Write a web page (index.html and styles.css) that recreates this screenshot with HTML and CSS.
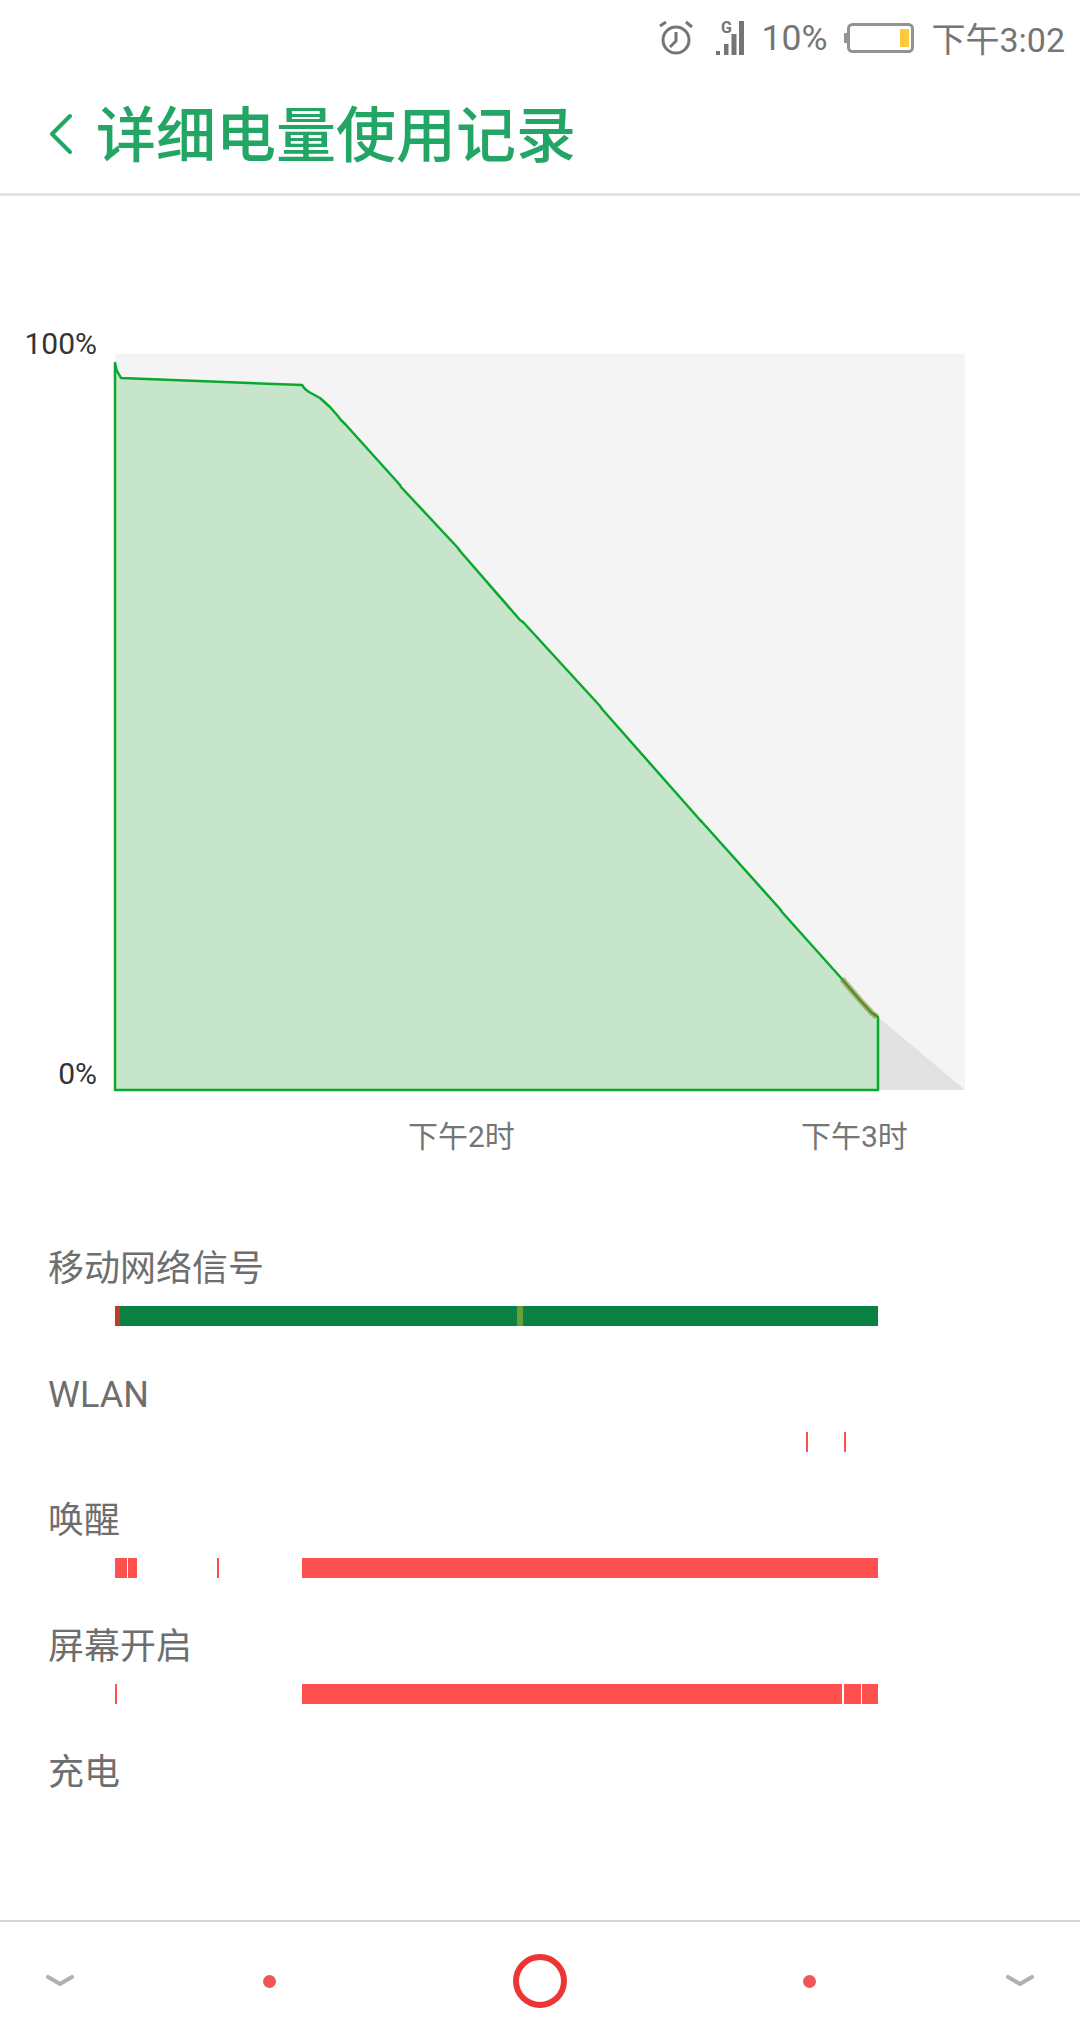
FILE: index.html
```html
<!DOCTYPE html>
<html lang="zh-CN">
<head>
<meta charset="utf-8">
<title>详细电量使用记录</title>
<link rel="stylesheet" href="styles.css">
</head>
<body>
<div class="page">
  <div class="status">
    <svg class="ic-alarm" width="34" height="36" viewBox="0 0 34 36">
      <circle cx="17" cy="20" r="13" fill="none" stroke="#757575" stroke-width="3"/>
      <path d="M17 12v9l-6 6" fill="none" stroke="#757575" stroke-width="3"/>
      <path d="M1 6l6-4M27 2l6 5" fill="none" stroke="#757575" stroke-width="3"/>
    </svg>
    <svg class="ic-signal" width="28" height="44" viewBox="0 -8 28 44">
      <text class="g" x="5" y="13">G</text>
      <rect x="0" y="31" width="4" height="4" fill="#757575"/>
      <rect x="8" y="24" width="4.5" height="11" fill="#757575"/>
      <rect x="15.5" y="14" width="5" height="21" fill="#757575"/>
      <rect x="23" y="1" width="5" height="34" fill="#757575"/>
    </svg>
    <span class="pct">10%</span>
    <svg class="ic-batt" width="70" height="30" viewBox="0 0 70 30">
      <rect x="0" y="10" width="3" height="10" fill="#939393"/>
      <rect x="4.5" y="1.5" width="64" height="27" rx="4" fill="#fff" stroke="#939393" stroke-width="3"/>
      <rect x="56" y="6" width="9" height="18" fill="#ffca3a"/>
    </svg>
    <span class="time">下午3:02</span>
  </div>

  <header class="nav">
    <svg class="back" width="24" height="44" viewBox="0 0 24 44">
      <path d="M21 4L3 22l18 18" fill="none" stroke="#22a565" stroke-width="4" stroke-linecap="round" stroke-linejoin="round"/>
    </svg>
    <h1 class="title">详细电量使用记录</h1>
  </header>

  <svg class="chart" width="1080" height="1046" viewBox="0 196 1080 1046">
    <text class="axis" x="97" y="354">100%</text>
    <text class="axis" x="97" y="1084">0%</text>
    <rect x="115" y="354" width="850" height="736" fill="#f4f4f5"/>
    <path d="M878 1017L965 1090H878Z" fill="#e1e1e1"/>
    <path class="area" d="M115 363L116.5 370L121 378L302 385L305 389L309 392L320 398L330 407L337 415L341 420L346 425L400 485L401 487L458 548L460 551L520 620L523 622L600 706L602 709L700 820L702 822L780 909L782 912L842 979L860 1000L872 1013L878 1017V1090H115Z"/>
    <path class="hl" d="M842 979L860 1000L872 1013L877 1017"/>
    <text class="tick" x="408" y="1147">下午2时</text>
    <text class="tick" x="801" y="1147">下午3时</text>
  </svg>

  <section class="rows">
    <div class="row">
      <div class="label">移动网络信号</div>
      <div class="track">
        <span class="seg sig-red" style="width:5px"></span><span class="seg sig-green" style="width:397px"></span><span class="seg sig-lime" style="width:6px"></span><span class="seg sig-green" style="width:355px"></span>
      </div>
    </div>
    <div class="row">
      <div class="label">WLAN</div>
      <div class="track">
        <span class="seg red" style="width:2px;margin-left:691px"></span><span class="seg red" style="width:2px;margin-left:36px"></span>
      </div>
    </div>
    <div class="row">
      <div class="label">唤醒</div>
      <div class="track">
        <span class="seg red" style="width:12px"></span><span class="seg red" style="width:9px;margin-left:1px"></span><span class="seg red" style="width:1.5px;margin-left:80px"></span><span class="seg red" style="width:576px;margin-left:83.5px"></span>
      </div>
    </div>
    <div class="row">
      <div class="label">屏幕开启</div>
      <div class="track">
        <span class="seg red" style="width:1.5px"></span><span class="seg red" style="width:540px;margin-left:185.5px"></span><span class="seg red" style="width:17px;margin-left:2px"></span><span class="seg red" style="width:16px;margin-left:1px"></span>
      </div>
    </div>
    <div class="row">
      <div class="label">充电</div>
      <div class="track"></div>
    </div>
  </section>

  <footer class="dock">
    <svg class="chev" width="28" height="14" viewBox="0 0 28 14"><path d="M2 2l12 7 12-7" fill="none" stroke="#b0b0b0" stroke-width="4" stroke-linecap="round" stroke-linejoin="round"/></svg>
    <span class="dot"></span>
    <span class="ring"></span>
    <span class="dot"></span>
    <svg class="chev chev-end" width="28" height="14" viewBox="0 0 28 14"><path d="M2 2l12 7 12-7" fill="none" stroke="#b0b0b0" stroke-width="4" stroke-linecap="round" stroke-linejoin="round"/></svg>
  </footer>
</div>
</body>
</html>
```
FILE: styles.css
```css
* { box-sizing: border-box; }
html, body { margin: 0; padding: 0; background: #fff; }
body { font-family: Roboto, "Noto Sans CJK SC", sans-serif; }
.page { width: 1080px; height: 2040px; display: flex; flex-direction: column; overflow: hidden; position: relative; }

.status { height: 70px; display: flex; align-items: center; justify-content: flex-end; padding: 5px 15px 0 0; color: #757575; font-size: 34px; }
.status svg { display: block; flex: none; }
.g { font: bold 16px Roboto, sans-serif; fill: #757575; }
.ic-signal { margin: -8px 0 0 23px; }
.pct { margin-left: 18px; font-size: 35.5px; }
.ic-batt { margin-left: 17px; }
.time { margin-left: 17px; }

.nav { height: 126px; display: flex; align-items: center; padding: 0 0 2px 49px; border-bottom: 3px solid #e2e2e2; }
.back { display: block; margin: 6px 23px 0 0; flex: none; }
.title { margin: 0; font-size: 60px; font-weight: 500; line-height: 80px; color: #22a565; font-family: "Noto Sans CJK SC", sans-serif; }

.chart { display: block; flex: none; }
.axis { font-size: 30px; fill: #333; text-anchor: end; }
.tick { font-size: 30px; fill: #757575; }
.area { fill: #c7e5cb; stroke: #0aa82d; stroke-width: 2.5; stroke-linejoin: round; }
.hl { fill: none; stroke: #8a7a20; stroke-opacity: .5; stroke-width: 6; }

.rows { display: flex; flex-direction: column; }
.row { height: 126px; }
.label { height: 52px; line-height: 54px; font-size: 36px; color: #6e6e6e; padding-left: 48px; }
.track { display: flex; height: 20px; margin: 12px 0 0 115px; }
.seg { display: block; height: 20px; flex: none; }
.red { background: #ff5050; }
.sig-red { background: #c23b29; }
.sig-green { background: #0b8043; }
.sig-lime { background: #689f38; }

.dock { position: absolute; top: 1920px; left: 0; width: 1080px; height: 120px; border-top: 2px solid #d6d6d6; background: #fff; display: grid; grid-template-columns: 120px 298px 244px 294px 124px; align-items: center; justify-items: center; }
.chev { display: block; margin-top: 2px; }
.chev-end { margin-left: 4px; }
.dot { width: 13px; height: 13px; border-radius: 50%; background: #f25555; }
.ring { width: 54px; height: 54px; border-radius: 50%; border: 6px solid #ee3535; }
```
